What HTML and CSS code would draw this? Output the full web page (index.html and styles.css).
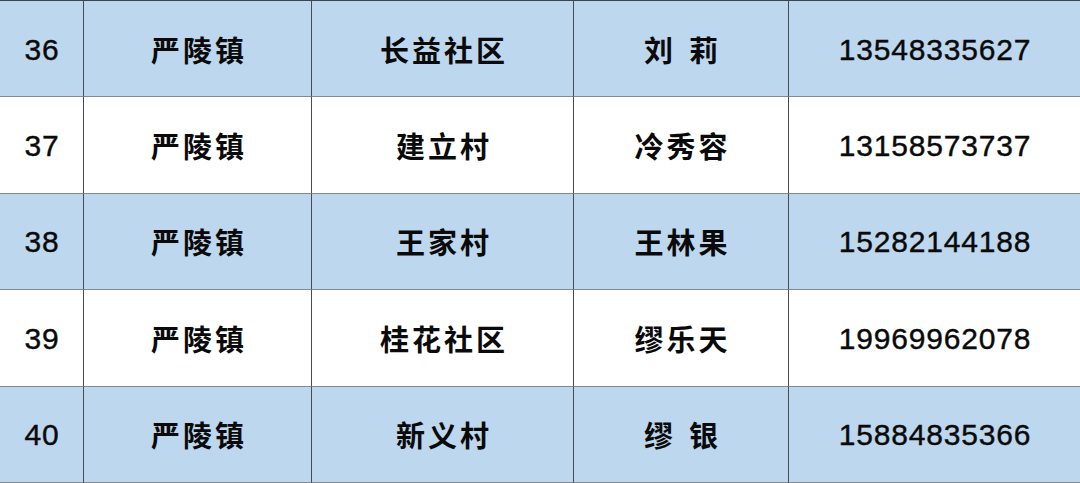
FILE: index.html
```html
<!DOCTYPE html>
<html lang="zh-CN">
<head>
<meta charset="utf-8">
<link rel="stylesheet" href="styles.css">
</head>
<body>
<div class="table">
  <div class="cell num blue">36</div>
  <div class="cell zh blue">严陵镇</div>
  <div class="cell zh blue">长益社区</div>
  <div class="cell zh blue">刘<span class="gap"></span>莉</div>
  <div class="cell num last blue">13548335627</div>

  <div class="cell num">37</div>
  <div class="cell zh">严陵镇</div>
  <div class="cell zh">建立村</div>
  <div class="cell zh">冷秀容</div>
  <div class="cell num last">13158573737</div>

  <div class="cell num blue">38</div>
  <div class="cell zh blue">严陵镇</div>
  <div class="cell zh blue">王家村</div>
  <div class="cell zh blue">王林果</div>
  <div class="cell num last blue">15282144188</div>

  <div class="cell num">39</div>
  <div class="cell zh">严陵镇</div>
  <div class="cell zh">桂花社区</div>
  <div class="cell zh">缪乐天</div>
  <div class="cell num last">19969962078</div>

  <div class="cell num blue">40</div>
  <div class="cell zh blue">严陵镇</div>
  <div class="cell zh blue">新义村</div>
  <div class="cell zh blue">缪<span class="gap"></span>银</div>
  <div class="cell num last blue">15884835366</div>
</div>
</body>
</html>
```

FILE: styles.css
```css
html, body {
  margin: 0;
  padding: 0;
  background: #ffffff;
}
.table {
  width: 1080px;
  display: grid;
  grid-template-columns: 84px 228px 262px 215px 1fr;
  grid-template-rows: repeat(5, 96.4px);
  border-top: 1px solid #3e444b;
}
.cell {
  box-sizing: border-box;
  display: flex;
  align-items: center;
  justify-content: center;
  border-right: 1px solid #464c53;
  border-bottom: 1px solid #808a95;
  color: #0a0a0a;
  background: #ffffff;
}
.cell.last {
  border-right: none;
}
.blue {
  background: #bdd7ee;
}
.num {
  font-family: "Liberation Sans", Arial, sans-serif;
  font-size: 30px;
  letter-spacing: 0.8px;
  padding-left: 1px;
  padding-top: 2px;
  -webkit-text-stroke: 0.4px #0a0a0a;
}
.zh {
  font-family: "Noto Sans CJK SC", sans-serif;
  font-weight: 700;
  font-size: 29px;
  letter-spacing: 3px;
  padding-left: 3px;
}
.gap {
  display: inline-block;
  width: 13px;
}
```
